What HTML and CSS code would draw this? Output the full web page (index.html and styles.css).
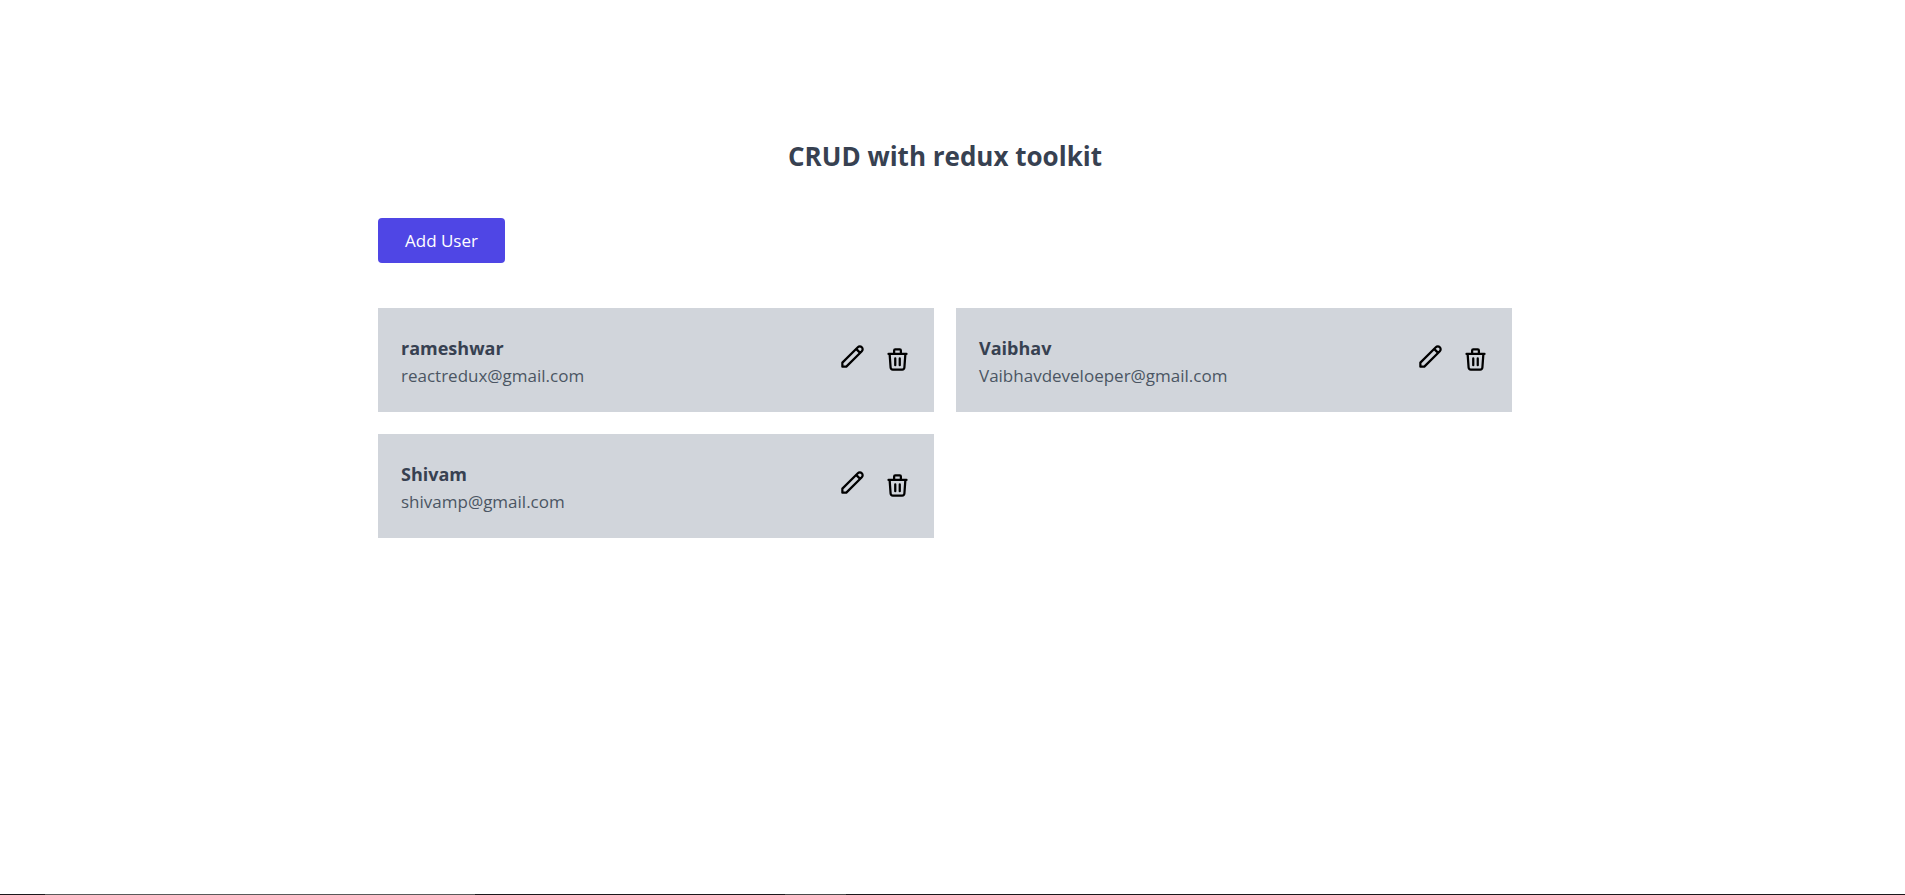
FILE: index.html
```html
<!DOCTYPE html>
<html lang="en">
<head>
<meta charset="utf-8">
<meta name="viewport" content="width=device-width, initial-scale=1">
<title>CRUD with redux toolkit</title>
<link rel="stylesheet" href="styles.css">
</head>
<body>
<svg class="sprite" aria-hidden="true">
  <symbol id="pencil" viewBox="0 0 24 24"><path d="M15.232 5.232l3.536 3.536m-2.036-5.036a2.5 2.5 0 113.536 3.536L6.5 21.036H3v-3.572L16.732 3.732z"/></symbol>
  <symbol id="trash" viewBox="0 0 24 24"><path d="M19 7l-.867 12.142A2 2 0 0116.138 21H7.862a2 2 0 01-1.995-1.858L5 7m5 4v6m4-6v6m1-10V4a1 1 0 00-1-1h-4a1 1 0 00-1 1v3M4 7h16"/></symbol>
</svg>
<div class="page">
  <main class="container">
    <h1 class="title">CRUD with redux toolkit</h1>
    <button class="add-button" type="button">Add User</button>
    <div class="users">
      <article class="card">
        <div class="info">
          <h2 class="name">rameshwar</h2>
          <span class="email">reactredux@gmail.com</span>
        </div>
        <div class="actions">
          <a class="edit" href="#edit-1" aria-label="Edit rameshwar"><svg class="icon"><use href="#pencil"/></svg></a>
          <button class="delete" type="button" aria-label="Delete rameshwar"><svg class="icon"><use href="#trash"/></svg></button>
        </div>
      </article>
      <article class="card">
        <div class="info">
          <h2 class="name">Vaibhav</h2>
          <span class="email">Vaibhavdeveloeper@gmail.com</span>
        </div>
        <div class="actions">
          <a class="edit" href="#edit-2" aria-label="Edit Vaibhav"><svg class="icon"><use href="#pencil"/></svg></a>
          <button class="delete" type="button" aria-label="Delete Vaibhav"><svg class="icon"><use href="#trash"/></svg></button>
        </div>
      </article>
      <article class="card">
        <div class="info">
          <h2 class="name">Shivam</h2>
          <span class="email">shivamp@gmail.com</span>
        </div>
        <div class="actions">
          <a class="edit" href="#edit-3" aria-label="Edit Shivam"><svg class="icon"><use href="#pencil"/></svg></a>
          <button class="delete" type="button" aria-label="Delete Shivam"><svg class="icon"><use href="#trash"/></svg></button>
        </div>
      </article>
    </div>
  </main>
  <div class="edge"></div>
</div>
</body>
</html>
```
FILE: styles.css
```css
* { box-sizing: border-box; }

body {
  margin: 0;
  background: #fff;
  color: #374151;
  font-family: "Open Sans", "Noto Sans", sans-serif;
  font-size: 17px;
  line-height: 28px;
}

.sprite { position: absolute; width: 0; height: 0; }

.page {
  --gutter: 15px;
  display: flex;
  flex-direction: column;
  min-height: 100vh;
}

.container {
  flex: 1;
  width: calc((100% - var(--gutter)) * 0.6);
  margin-left: calc((100% - var(--gutter)) * 0.2);
  padding-top: 139px;
}

.title {
  margin: 0 0 44px;
  font-size: 26px;
  line-height: 35px;
  font-weight: 700;
  text-align: center;
}

.add-button {
  display: block;
  margin: 0 0 45px;
  padding: 9px 27px 8px;
  border: 0;
  border-radius: 4px;
  background: #4f46e5;
  color: #fff;
  font: inherit;
  cursor: pointer;
}

.users {
  display: grid;
  grid-template-columns: repeat(2, minmax(0, 1fr));
  gap: 22px;
}

.card {
  display: flex;
  align-items: flex-start;
  justify-content: space-between;
  padding: 26px 23px 22px;
  background: #d1d5db;
}

.name {
  margin: 0;
  font-size: 18px;
  line-height: 28px;
  font-weight: 700;
}

.email {
  display: block;
  color: #4b5563;
}

.actions {
  display: flex;
  align-items: flex-start;
  gap: 18px;
  padding-top: 9px;
}

.edit {
  display: block;
  color: #000;
}

.delete {
  margin-top: 3px;
  padding: 0;
  border: 0;
  background: none;
  color: #000;
  cursor: pointer;
}

.icon {
  display: block;
  width: 27px;
  height: 27px;
  fill: none;
  stroke: currentColor;
  stroke-width: 2;
  stroke-linecap: round;
  stroke-linejoin: round;
}

.edge {
  height: 1px;
  background: linear-gradient(90deg, #1b181b 45px, #5a5a5a 45px 475px, #1b181b 475px 785px, #4a4a4a 785px 846px, #1b181b 846px);
}
```
